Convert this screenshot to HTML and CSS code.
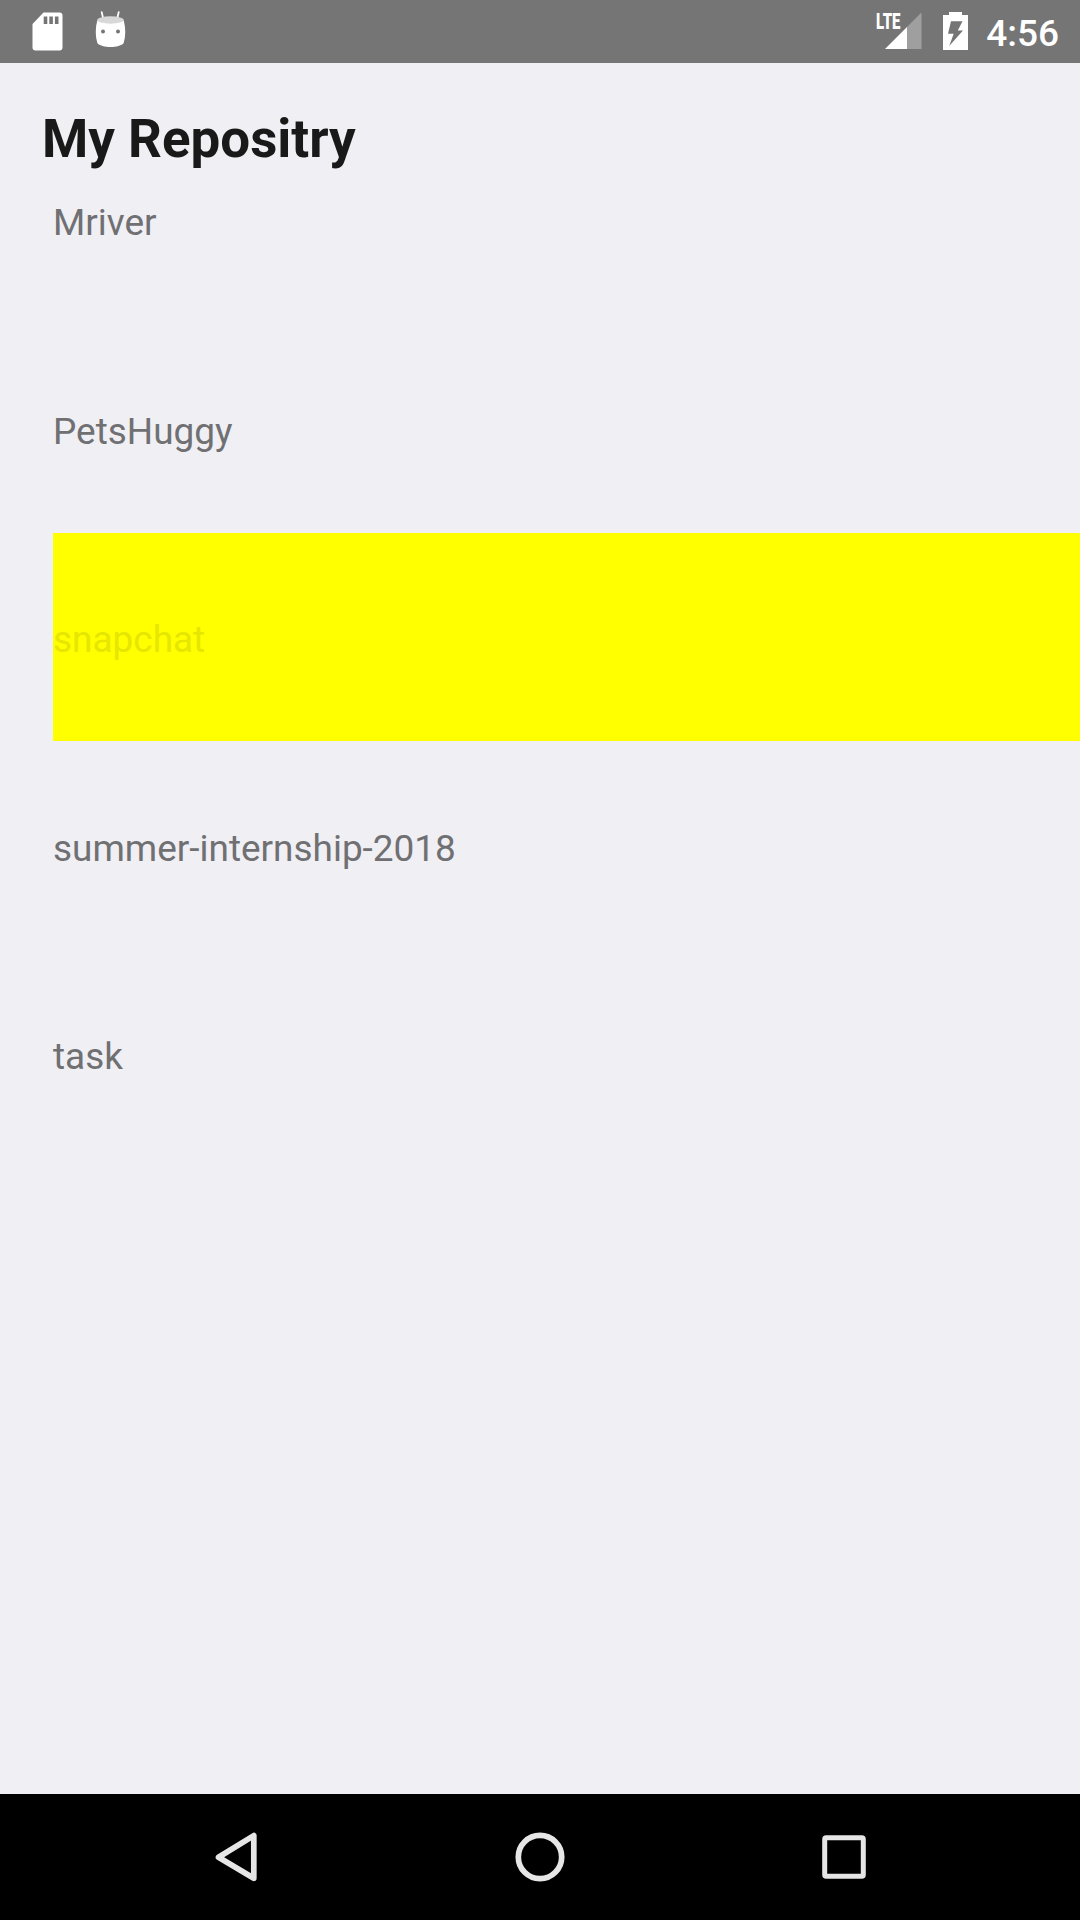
FILE: index.html
```html
<!DOCTYPE html>
<html lang="en">
<head>
<meta charset="utf-8">
<title>My Repositry</title>
<link rel="stylesheet" href="styles.css">
</head>
<body>
<div class="screen">
  <header class="status-bar">
    <div class="status-group notifications">
      <svg class="icon-sd" width="31" height="39" viewBox="0 0 31 39" aria-hidden="true">
        <path fill="#fff" fill-rule="evenodd" d="M11.5.5H27.500a3 3 0 0 1 3 3V35.500a3 3 0 0 1-3 3H3.500a3 3 0 0 1-3-3V12ZM11.700 4.500V12H15.300V4.500ZM17.300 4.500V12H20.900V4.500ZM22.900 4.500V12H26.500V4.500Z"/>
      </svg>
      <svg class="icon-android" width="32" height="37" viewBox="0 0 32 37" aria-hidden="true">
        <path stroke="#fff" stroke-width="1.800" stroke-linecap="round" d="M6.700 1.200 8.300 8M23.700 1.200 22.100 8"/>
        <path fill="#fff" d="M2.200 9.500C.3 17 .2 25 2.300 32 4 34.500 10 36 15.500 36S27 34.500 28.700 32C30.800 25 30.700 17 28.800 9.500Z"/>
        <ellipse cx="15.500" cy="9" rx="13.400" ry="3.700" fill="#d8d8d8"/>
        <circle cx="8" cy="20.500" r="2" fill="#757575"/>
        <circle cx="23" cy="20.500" r="2" fill="#757575"/>
      </svg>
    </div>
    <div class="status-group system">
      <svg class="icon-signal" width="46" height="46" viewBox="0 -8 46 46" aria-hidden="true">
        <path fill="#9f9f9f" d="M45.500.5V37H30V16Z"/>
        <path fill="#fff" d="M31 15V37H9Z"/>
        <text class="network" x="0" y="16.700" textLength="24.500" lengthAdjust="spacingAndGlyphs">LTE</text>
      </svg>
      <svg class="icon-battery" width="25" height="38" viewBox="0 0 25 38" aria-hidden="true">
        <path fill="#fff" d="M6 0H19V3H25V38H0V3H6Z"/>
        <path fill="#757575" d="M8 9.200H19.500L14.800 18.500H20L6.200 34 10.700 21.800H5Z"/>
      </svg>
      <span class="clock">4:56</span>
    </div>
  </header>
  <main class="content">
    <h1 class="title">My Repositry</h1>
    <ul class="repos">
      <li class="repo repo-first">Mriver</li>
      <li class="repo">PetsHuggy</li>
      <li class="repo repo-selected">snapchat</li>
      <li class="repo">summer-internship-2018</li>
      <li class="repo">task</li>
    </ul>
  </main>
  <nav class="nav-bar">
    <svg width="54" height="54" viewBox="0 0 54 54" aria-label="Back">
      <path d="M9.500 27.200 44.800 5.600V48.300Z" stroke-width="5.700"/>
    </svg>
    <svg width="54" height="54" viewBox="0 0 54 54" aria-label="Home">
      <circle cx="27" cy="27" r="21.700" stroke-width="5.700"/>
    </svg>
    <svg width="54" height="54" viewBox="0 0 54 54" aria-label="Overview">
      <rect x="7.700" y="7.700" width="38.600" height="38.600" rx="1.500" stroke-width="5"/>
    </svg>
  </nav>
</div>
</body>
</html>
```
FILE: styles.css
```css
* {
  box-sizing: border-box;
}

body {
  margin: 0;
  font-family: Roboto, sans-serif;
}

.screen {
  display: flex;
  flex-direction: column;
  width: 1080px;
  height: 1920px;
  background: #efeff4;
}

.status-bar {
  display: flex;
  justify-content: space-between;
  height: 63px;
  padding: 0 21px 0 32px;
  background: #757575;
}

.status-group {
  display: flex;
  align-items: flex-start;
}

.notifications {
  gap: 32px;
  padding-top: 11px;
}

.icon-sd {
  margin-top: 1px;
}

.system {
  padding-top: 4px;
}

.network {
  fill: #fff;
  font-size: 21.5px;
  font-weight: 900;
}

.icon-battery {
  margin: 8px 18px 0 21px;
}

.clock {
  margin-top: 9px;
  color: #fff;
  font-size: 37px;
  font-weight: 500;
  line-height: 42px;
}

.content {
  flex: 1;
}

.title {
  height: 135px;
  margin: 0;
  padding: 44px 0 0 42px;
  color: #191919;
  font-size: 52.9px;
  font-weight: 700;
  line-height: 64px;
}

.repos {
  display: grid;
  grid-template-rows: 127px 208px 208px 209px 208px;
  margin: 0 0 0 53px;
  padding: 0;
  list-style: none;
}

.repo {
  display: flex;
  align-items: center;
  padding-top: 5px;
  color: #707073;
  font-size: 36.95px;
  line-height: 44px;
}

.repo:nth-child(4) {
  padding-top: 6px;
}

.repo-first {
  align-items: flex-start;
  padding-top: 3px;
}

.repo-selected {
  background: #ff0;
  color: #e6e600;
}

.nav-bar {
  display: flex;
  justify-content: center;
  gap: 250px;
  height: 126px;
  padding-top: 36px;
  background: #000;
}

.nav-bar svg {
  fill: none;
  stroke: #e6e6e6;
  stroke-linejoin: round;
}
```
